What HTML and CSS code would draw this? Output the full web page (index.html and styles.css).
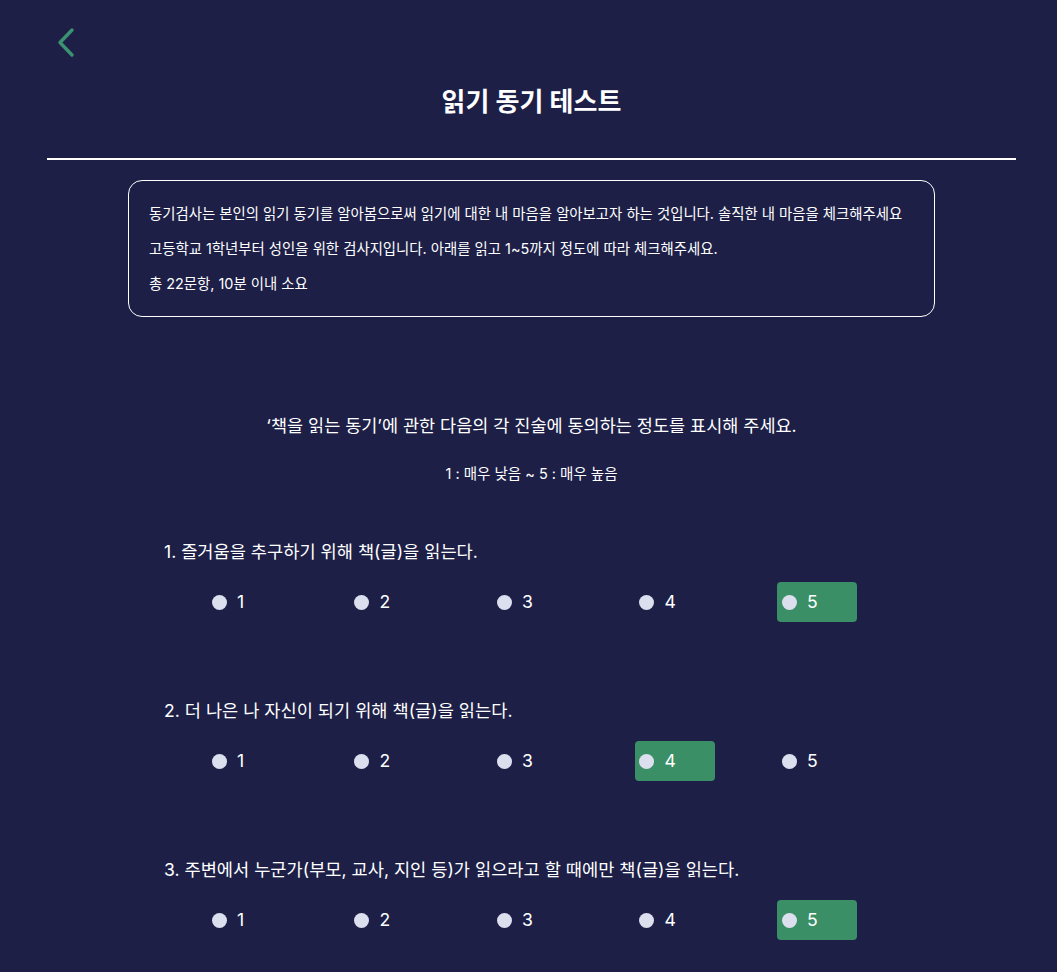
FILE: index.html
```html
<!DOCTYPE html>
<html lang="ko">
<head>
<meta charset="utf-8">
<title>읽기 동기 테스트</title>
<link rel="stylesheet" href="styles.css">
</head>
<body>
<div class="page">
  <header class="header">
    <a class="back" href="#" aria-label="뒤로">
      <svg width="20" height="32" viewBox="0 0 20 32" fill="none">
        <path d="M16 3 L4 15.5 L16 28" stroke="#3b9270" stroke-width="3.4" stroke-linecap="round" stroke-linejoin="round"/>
      </svg>
    </a>
    <h1 class="title">읽기 동기 테스트</h1>
  </header>
  <div class="rule"></div>
  <section class="info">
    <p>동기검사는 본인의 읽기 동기를 알아봄으로써 읽기에 대한 내 마음을 알아보고자 하는 것입니다. 솔직한 내 마음을 체크해주세요</p>
    <p>고등학교 1학년부터 성인을 위한 검사지입니다. 아래를 읽고 1~5까지 정도에 따라 체크해주세요.</p>
    <p>총 22문항, 10분 이내 소요</p>
  </section>
  <section class="guide">
    <p class="guide-main">‘책을 읽는 동기’에 관한 다음의 각 진술에 동의하는 정도를 표시해 주세요.</p>
    <p class="guide-scale">1 : 매우 낮음 ~ 5 : 매우 높음</p>
  </section>
  <section class="questions">
    <div class="question">
      <p class="q-text">1. 즐거움을 추구하기 위해 책(글)을 읽는다.</p>
      <div class="options">
        <div class="option"><span class="dot"></span><span class="num">1</span></div>
        <div class="option"><span class="dot"></span><span class="num">2</span></div>
        <div class="option"><span class="dot"></span><span class="num">3</span></div>
        <div class="option"><span class="dot"></span><span class="num">4</span></div>
        <div class="option selected"><span class="dot"></span><span class="num">5</span></div>
      </div>
    </div>
    <div class="question">
      <p class="q-text">2. 더 나은 나 자신이 되기 위해 책(글)을 읽는다.</p>
      <div class="options">
        <div class="option"><span class="dot"></span><span class="num">1</span></div>
        <div class="option"><span class="dot"></span><span class="num">2</span></div>
        <div class="option"><span class="dot"></span><span class="num">3</span></div>
        <div class="option selected"><span class="dot"></span><span class="num">4</span></div>
        <div class="option"><span class="dot"></span><span class="num">5</span></div>
      </div>
    </div>
    <div class="question">
      <p class="q-text">3. 주변에서 누군가(부모, 교사, 지인 등)가 읽으라고 할 때에만 책(글)을 읽는다.</p>
      <div class="options">
        <div class="option"><span class="dot"></span><span class="num">1</span></div>
        <div class="option"><span class="dot"></span><span class="num">2</span></div>
        <div class="option"><span class="dot"></span><span class="num">3</span></div>
        <div class="option"><span class="dot"></span><span class="num">4</span></div>
        <div class="option selected"><span class="dot"></span><span class="num">5</span></div>
      </div>
    </div>
  </section>
</div>
</body>
</html>
```
FILE: styles.css
```css
* { box-sizing: border-box; }
html, body { margin: 0; padding: 0; }
body {
  background: #1d1f47;
  color: #ffffff;
  font-family: "Inter", "Noto Sans CJK KR", "Noto Sans", sans-serif;
  min-height: 972px;
}
p { margin: 0; }
.page {
  margin-left: 47px;
  width: 969px;
}
.header {
  display: flex;
  flex-direction: column;
}
.back {
  display: block;
  width: 20px;
  height: 32px;
  margin-top: 27px;
  margin-left: 9px;
}
.back svg { display: block; }
.title {
  margin: 26px 0 0;
  text-align: center;
  font-size: 26px;
  font-weight: 700;
  line-height: 34px;
}
.rule {
  margin-top: 39px;
  height: 2px;
  background: #ffffff;
}
.info {
  margin: 20px 81px 0;
  border: 1px solid #ffffff;
  border-radius: 14px;
  padding: 15px 20px 15px;
}
.info p {
  font-size: 14.4px;
  line-height: 35px;
}
.guide {
  margin-top: 97px;
  text-align: center;
}
.guide-main {
  font-size: 17.5px;
  line-height: 24px;
}
.guide-scale {
  margin-top: 26px;
  font-size: 14.5px;
  line-height: 20px;
}
.questions {
  margin: 56px 81px 0;
  display: flex;
  flex-direction: column;
  gap: 77px;
}
.q-text {
  padding-left: 36px;
  font-size: 17.6px;
  line-height: 24px;
}
.options {
  margin-top: 18px;
  padding-left: 79px;
  display: flex;
  gap: 62.5px;
}
.option {
  width: 80px;
  height: 40px;
  border-radius: 4px;
  display: flex;
  align-items: center;
  padding-left: 4.5px;
  gap: 10.5px;
}
.option.selected { background: #3a8f66; }
.dot {
  width: 15px;
  height: 15px;
  border-radius: 50%;
  background: #dcdfee;
  flex: none;
}
.num {
  font-size: 17.6px;
  line-height: 20px;
}
```
